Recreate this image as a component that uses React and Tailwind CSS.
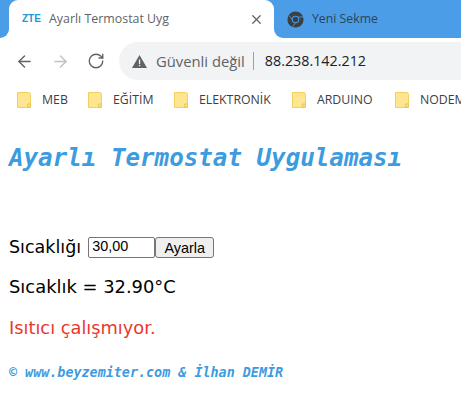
// App.jsx
import { ArrowLeft, ArrowRight, RotateCw, X } from "lucide-react";

const BOOKMARKS = [
  { name: "MEB", w: "w-[71px]" },
  { name: "EĞİTİM", w: "w-[86px]" },
  { name: "ELEKTRONİK", w: "w-[118px]" },
  { name: "ARDUINO", w: "w-[103px]" },
  { name: "NODEMCU", w: "w-[100px]" },
];

function FolderIcon() {
  return (
    <svg width="14" height="16" viewBox="0 0 14 16" className="shrink-0">
      <path d="M0.5 0.5H11.5Q13.5 0.5 13.5 2.5V15.5H0.5Z" fill="#fde68f" stroke="#f2cf5e" />
      <circle cx="12" cy="13.5" r="1.7" fill="#fde68f" stroke="#e6c04e" />
    </svg>
  );
}

function ChromeIcon() {
  return (
    <svg width="17" height="17" viewBox="0 0 20 20" className="shrink-0">
      <circle cx="10" cy="10" r="9.5" fill="#3c4043" />
      <path d="M2.5 5.5L7 11M10 14L6.5 18.5M13.5 7H19" stroke="#4a9de6" strokeWidth="1" fill="none" />
      <circle cx="10" cy="10" r="4.4" fill="#4a9de6" />
      <circle cx="10" cy="10" r="3.2" fill="#3c4043" />
    </svg>
  );
}

function TabBar() {
  return (
    <div className="flex h-[38px] bg-[linear-gradient(#4a9de6_50%,#ffffff_50%)]">
      <div className="w-[9px] bg-[#4a9de6] rounded-br-[9px]" />
      <div className="w-[265px] bg-white rounded-t-[9px] flex items-center pl-[13px] pr-[10px]">
        <span className="w-[18px] text-[10px] leading-none font-bold text-[#1c9ad6] font-['Liberation_Sans',sans-serif]">ZTE</span>
        <span className="ml-[9px] flex-1 text-[12.4px] text-[#5f6368] whitespace-nowrap">Ayarlı Termostat Uyg</span>
        <X size={15} strokeWidth={2} className="text-[#5f6368]" />
      </div>
      <div className="flex-1 bg-[#4a9de6] rounded-bl-[9px] flex items-center pl-[13px]">
        <ChromeIcon />
        <span className="ml-[8px] text-[12.3px] text-[#2f4356] whitespace-nowrap">Yeni Sekme</span>
      </div>
    </div>
  );
}

function Toolbar() {
  return (
    <div className="flex items-center h-[42px] pt-[4px] bg-white">
      <ArrowLeft size={19} strokeWidth={1.8} className="ml-[15px] text-[#5f6368]" />
      <ArrowRight size={19} strokeWidth={1.8} className="ml-[17px] text-[#bfc1c4]" />
      <RotateCw size={18} strokeWidth={1.8} className="ml-[17px] text-[#5f6368]" />
      <div className="ml-[14px] flex-1 h-[38px] bg-[#f1f3f4] rounded-l-full flex items-center pl-[13px]">
        <svg width="15" height="13" viewBox="0 0 15 13" className="shrink-0">
          <path d="M7.5 0L15 13H0Z" fill="#5f6368" />
          <rect x="6.9" y="4.5" width="1.3" height="4.5" fill="#f1f3f4" />
          <rect x="6.9" y="9.8" width="1.3" height="1.4" fill="#f1f3f4" />
        </svg>
        <span className="ml-[9px] text-[14.8px] text-[#5f6368] whitespace-nowrap">Güvenli değil</span>
        <span className="ml-[8px] w-px h-[18px] bg-[#9aa0a6]" />
        <span className="ml-[11px] text-[14.3px] text-[#202124] whitespace-nowrap">88.238.142.212</span>
      </div>
    </div>
  );
}

function BookmarksBar() {
  return (
    <div className="flex items-center h-[38px] pl-[17px] pt-[2px] bg-white overflow-hidden">
      {BOOKMARKS.map(b => (
        <div key={b.name} className={`flex items-center shrink-0 ${b.w}`}>
          <FolderIcon />
          <span className="ml-[11px] text-[12.3px] text-[#3c4043] whitespace-nowrap">{b.name}</span>
        </div>
      ))}
    </div>
  );
}

export default function App() {
  return (
    <div className="w-[461px] h-[401px] overflow-hidden bg-white font-['Open_Sans',sans-serif]">
      <TabBar />
      <Toolbar />
      <BookmarksBar />
      <div className="pl-[9px] pt-[25px]">
        <h1 className="text-[24.2px] leading-[30px] font-bold italic text-[#3d9be0] whitespace-nowrap font-['DejaVu_Sans_Mono',monospace]">
          Ayarlı Termostat Uygulaması
        </h1>
        <div className="mt-[63px] flex items-center h-[22px] text-[17.5px] text-black font-['DejaVu_Sans',sans-serif]">
          <span>Sıcaklığı</span>
          <input
            defaultValue="30,00"
            className="ml-[7px] w-[67px] h-[21px] px-[3px] border border-[#767676] rounded-[2px] text-[14.4px] font-['Liberation_Sans',sans-serif]"
          />
          <button className="w-[59px] h-[21px] bg-[#efefef] border border-[#767676] rounded-[3px] text-[14.4px] font-['Liberation_Sans',sans-serif]">
            Ayarla
          </button>
        </div>
        <p className="mt-[18px] text-[17.9px] leading-[22px] text-black font-['DejaVu_Sans',sans-serif]">Sıcaklık = 32.90°C</p>
        <p className="mt-[19px] text-[17.8px] leading-[22px] text-[#e8392c] font-['DejaVu_Sans',sans-serif]">Isıtıcı çalışmıyor.</p>
        <p className="mt-[25px] text-[13.4px] leading-[18px] font-bold italic text-[#3d9be0] whitespace-nowrap font-['DejaVu_Sans_Mono',monospace]">
          © www.beyzemiter.com &amp; İlhan DEMİR
        </p>
      </div>
    </div>
  );
}
